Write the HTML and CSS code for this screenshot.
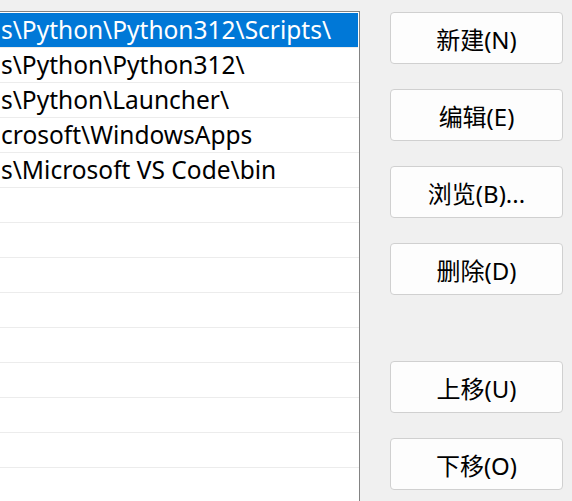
FILE: index.html
```html
<!DOCTYPE html>
<html lang="zh-CN">
<head>
    <meta charset="UTF-8">
    <title>编辑环境变量</title>
    <link rel="stylesheet" href="styles.css">
</head>
<body>
    <div class="dialog">
        <div class="path-list">
            <div class="path-item selected">s\Python\Python312\Scripts\</div>
            <div class="path-item">s\Python\Python312\</div>
            <div class="path-item">s\Python\Launcher\</div>
            <div class="path-item">crosoft\WindowsApps</div>
            <div class="path-item">s\Microsoft VS Code\bin</div>
            <div class="path-item"></div>
            <div class="path-item"></div>
            <div class="path-item"></div>
            <div class="path-item"></div>
            <div class="path-item"></div>
            <div class="path-item"></div>
            <div class="path-item"></div>
            <div class="path-item"></div>
            <div class="path-item"></div>
        </div>

        <div class="actions">
            <button class="btn">新建(N)</button>
            <button class="btn">编辑(E)</button>
            <button class="btn">浏览(B)...</button>
            <button class="btn">删除(D)</button>
            <button class="btn move-up">上移(U)</button>
            <button class="btn">下移(O)</button>
        </div>
    </div>
</body>
</html>
```

FILE: styles.css
```css
html, body {
    margin: 0;
    padding: 0;
    height: 100%;
    overflow: hidden;
}

body {
    background: #f0f0f0;
    font-family: "Noto Sans", "Noto Sans CJK SC", sans-serif;
    font-size: 24px;
    color: #000;
}

.dialog {
    display: flex;
    align-items: flex-start;
}

.path-list {
    width: 370px;
    margin-left: -10px;
    margin-top: 11px;
    height: 500px;
    padding-top: 1px;
    background: #fff;
    border: 1px solid #838383;
    border-bottom: none;
    box-sizing: border-box;
    overflow: hidden;
}

.path-item {
    height: 34px;
    line-height: 34px;
    padding-left: 10px;
    font-size: 24.5px;
    border-bottom: 1px solid #ececec;
    white-space: nowrap;
    overflow: hidden;
}

.path-item.selected {
    background: #0078d7;
    color: #fff;
    margin-right: 1px;
}

.actions {
    display: flex;
    flex-direction: column;
    gap: 25px;
    margin-left: 30px;
    margin-top: 12px;
}

.btn {
    width: 173px;
    height: 52px;
    padding: 0;
    background: #fdfdfd;
    border: 1px solid #d0d0d0;
    border-radius: 4px;
    font-family: inherit;
    font-size: 24px;
    color: #000;
}

.move-up {
    margin-top: 41px;
}
```
